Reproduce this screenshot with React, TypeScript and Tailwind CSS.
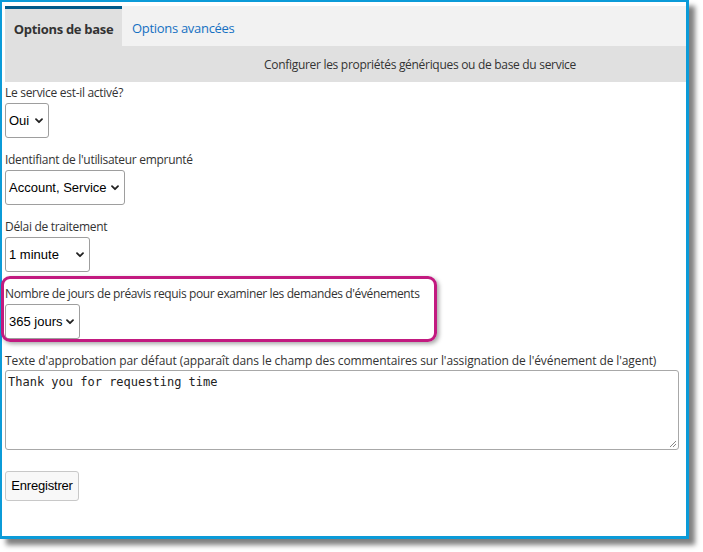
import React from "react";

const labelCls = "block text-[12px] leading-[16px] text-[#333] tracking-[-0.3px] [font-family:'Open_Sans',sans-serif]";

function Chevron() {
  return (
    <svg width="8" height="6" viewBox="0 0 8 6" className="shrink-0">
      <path d="M1 1.2 L4 4.2 L7 1.2" fill="none" stroke="#222" strokeWidth="1.8" strokeLinecap="round" strokeLinejoin="round" />
    </svg>
  );
}

function SelectBox({ value, width }: { value: string; width: string }) {
  return (
    <div
      className={`${width} h-[35px] mt-[2px] flex items-center justify-between pl-[3px] pr-[5px] border border-[#9e9e9e] rounded-[3px] bg-white text-[13px] text-black [font-family:'Liberation_Sans',Arial,sans-serif]`}
    >
      <span>{value}</span>
      <Chevron />
    </div>
  );
}

export default function App() {
  return (
    <div className="relative w-[703px] h-[552px] bg-white overflow-hidden">
      <div className="w-[689px] h-[539px] border-2 border-r-[3px] border-b-[3px] border-[#0b9bd8] shadow-[6px_6px_5px_rgba(0,0,0,0.5)] pl-[3px] pt-[4px] bg-white">
        {/* tab strip */}
        <div className="h-[40px] bg-[#f2f2f2] flex [font-family:'Open_Sans',sans-serif] text-[13px] tracking-[-0.3px]">
          <div className="w-[117px] h-full border-t-[3px] border-[#005a8a] bg-[#e0e0e0] flex items-center justify-center pt-[5px] font-bold text-[#333]">
            Options de base
          </div>
          <div className="h-full flex items-center pl-[10px] pt-[5px] text-[#1570c2]">Options avancées</div>
        </div>
        <div className="h-[36px] bg-[#e0e0e0] flex items-center pl-[259px] pt-[1px] text-[12px] tracking-[-0.3px] text-[#333] [font-family:'Open_Sans',sans-serif]">
          Configurer les propriétés génériques ou de base du service
        </div>

        <div className="pt-[3px]">
          <div className="mb-[14px]">
            <span className={labelCls}>Le service est-il activé?</span>
            <SelectBox value="Oui" width="w-[44px]" />
          </div>
          <div className="mb-[14px]">
            <span className={labelCls}>Identifiant de l'utilisateur emprunté</span>
            <SelectBox value="Account, Service" width="w-[120px]" />
          </div>
          <div className="mb-[14px]">
            <span className={labelCls}>Délai de traitement</span>
            <SelectBox value="1 minute" width="w-[85px]" />
          </div>
          <div className="mb-[14px]">
            <span className="block text-[12px] leading-[16px] text-[#333] tracking-[-0.38px] [font-family:'Open_Sans',sans-serif]">
              Nombre de jours de préavis requis pour examiner les demandes d'événements
            </span>
            <SelectBox value="365 jours" width="w-[75px]" />
          </div>
          <div>
            <span className="block text-[12px] leading-[16px] text-[#333] tracking-[-0.1px] [font-family:'Open_Sans',sans-serif]">
              Texte d'approbation par défaut (apparaît dans le champ des commentaires sur l'assignation de l'événement de l'agent)
            </span>
            <div className="relative w-[674px] h-[80px] mt-[1px] border border-[#a8a8a8] rounded-[3px] px-[2px] py-[3px] text-[12px] leading-[16px] text-[#222] [font-family:'DejaVu_Sans_Mono',monospace]">
              Thank you for requesting time
              <svg width="8" height="8" viewBox="0 0 8 8" className="absolute right-[1px] bottom-[1px]">
                <path d="M7 1 L1 7 M7 4 L4 7" stroke="#888" strokeWidth="1" />
              </svg>
            </div>
          </div>
          <button className="mt-[21px] w-[74px] h-[30px] border border-[#c8c8c8] rounded-[3px] bg-[#f8f8f8] text-[13px] tracking-[-0.2px] text-black [font-family:'Liberation_Sans',Arial,sans-serif]">
            Enregistrer
          </button>
        </div>
      </div>

      {/* highlight callout around the notice field */}
      <div className="absolute left-[1px] top-[276px] w-[436px] h-[66px] border-[3px] border-[#c21a80] rounded-[9px] shadow-[2px_2px_4px_rgba(0,0,0,0.35)]" />
    </div>
  );
}
